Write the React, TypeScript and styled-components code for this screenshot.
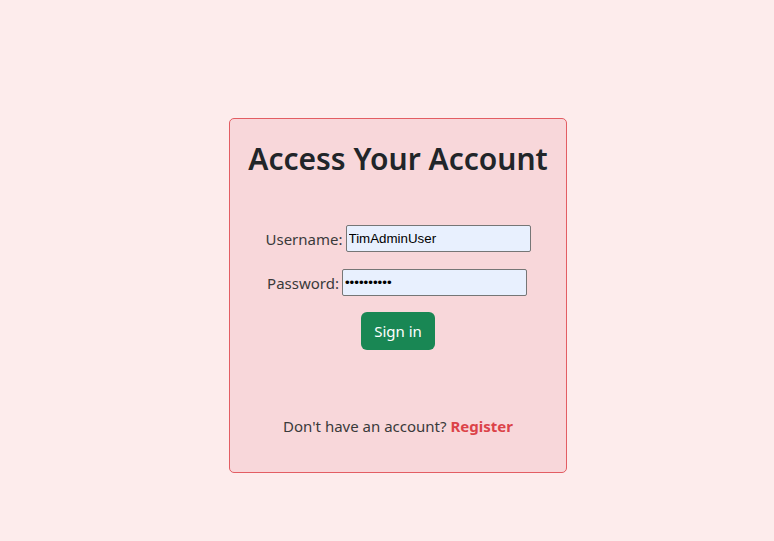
import React from 'react';
import styled, { createGlobalStyle } from 'styled-components';

const GlobalStyle = createGlobalStyle`
  html, body {
    margin: 0;
    padding: 0;
    background: #fdecec;
    font-family: "Noto Sans", "Open Sans", sans-serif;
    color: #212529;
  }
`;

const Page = styled.div`
  min-height: 541px;
  box-sizing: border-box;
  padding: 118px 0 0 22px;
  display: flex;
  justify-content: center;
  align-items: flex-start;
`;

const Card = styled.div`
  width: 338px;
  height: 355px;
  box-sizing: border-box;
  background: #f8d7da;
  border: 1px solid #e35d63;
  border-radius: 5px;
  display: flex;
  flex-direction: column;
  align-items: center;
  padding-top: 20px;
`;

const Title = styled.h1`
  margin: 0 0 46px;
  font-size: 30px;
  font-weight: 600;
  line-height: 40px;
  color: #212529;
`;

const Form = styled.form`
  display: flex;
  flex-direction: column;
  align-items: center;
`;

const Row = styled.label<{ $shift?: number }>`
  display: flex;
  align-items: center;
  gap: 3px;
  font-size: 15px;
  color: #3a3a3a;
  margin-bottom: 17px;
  transform: translateX(${(p) => p.$shift ?? 0}px);
`;

const Input = styled.input`
  width: 185px;
  height: 27px;
  box-sizing: border-box;
  background: #e8f0fe;
  border: 1px solid #767676;
  border-radius: 2px;
  padding: 1px 2px;
  font-family: "Liberation Sans", Arial, sans-serif;
  font-size: 13.33px;
  color: #000;
  outline: none;
`;

const Button = styled.button`
  margin-top: -1px;
  width: 74px;
  height: 38px;
  border: none;
  border-radius: 6px;
  background: #198754;
  color: #fff;
  font-family: "Noto Sans", sans-serif;
  font-size: 15px;
  cursor: pointer;
`;

const Footer = styled.p`
  margin: 66px 0 0;
  font-size: 15px;
  color: #3a3a3a;
`;

const RegisterLink = styled.a`
  color: #dc4349;
  font-weight: 700;
  text-decoration: none;
`;

export default function App() {
  return (
    <>
      <GlobalStyle />
      <Page>
        <Card>
          <Title>Access Your Account</Title>
          <Form onSubmit={(e) => e.preventDefault()}>
            <Row>
              Username:
              <Input type="text" defaultValue="TimAdminUser" />
            </Row>
            <Row $shift={-1}>
              Password:
              <Input type="password" defaultValue="••••••••••" />
            </Row>
            <Button type="submit">Sign in</Button>
          </Form>
          <Footer>
            Don't have an account? <RegisterLink href="#">Register</RegisterLink>
          </Footer>
        </Card>
      </Page>
    </>
  );
}
